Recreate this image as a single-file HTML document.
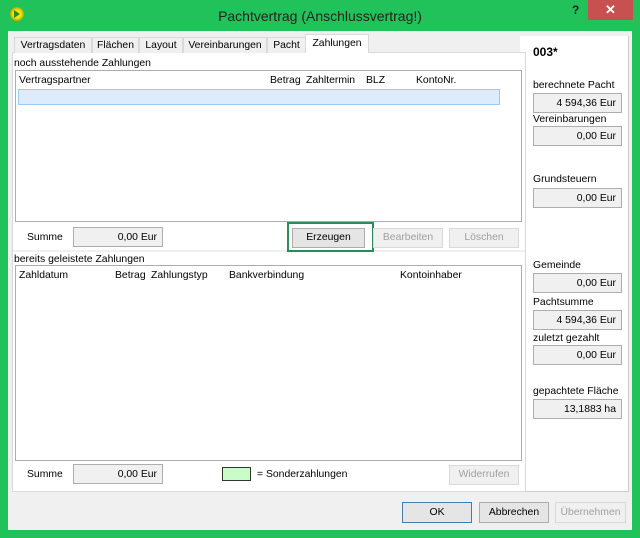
<!DOCTYPE html>
<html><head><meta charset="utf-8"><style>
*{box-sizing:border-box;margin:0;padding:0}
body{width:640px;height:538px;background:#22c25a;font-family:"Liberation Sans",sans-serif;font-size:10.4px;color:#000;position:relative;overflow:hidden}
.a{position:absolute}
.t{position:absolute;white-space:nowrap;line-height:13px}
.box{position:absolute;background:#f0f0f0;border:1px solid #adadad;text-align:right;padding-right:5px;line-height:19px}
.btn{position:absolute;background:#e5e5e5;border:1px solid #adadad;text-align:center;line-height:18px}
.dis{background:#f0f0f0;border-color:#d9d9d9;color:#a0a0a0}
.tab{position:absolute;top:37px;height:16px;background:#f0f0f0;border:1px solid #d9d9d9;border-bottom:none;text-align:center;line-height:15px}
</style></head><body>
<div class="a" style="left:10px;top:7px;width:14px;height:14px;border-radius:50%;background:radial-gradient(circle,#ffe600 40%,#9ba000 75%,#c9d0a0);"></div>
<div class="a" style="left:14px;top:10px;width:0;height:0;border-left:6px solid #2a8a2a;border-top:4px solid transparent;border-bottom:4px solid transparent"></div>
<div class="t" style="left:0;width:640px;text-align:center;top:7px;font-size:14px;line-height:18px;color:#222">Pachtvertrag (Anschlussvertrag!)</div>
<div class="t" style="left:572px;top:4px;font-weight:bold;font-size:12px;color:#222">?</div>
<div class="a" style="left:588px;top:0;width:45px;height:20px;background:#c75050;color:#fff;text-align:center;font-size:13px;line-height:20px;font-weight:bold">✕</div>
<div class="a" style="left:8px;top:31px;width:624px;height:499px;background:#f0f0f0"></div>
<div class="a" style="left:520px;top:36px;width:109px;height:456px;background:#fff;border-right:1px solid #ccc;border-bottom:1px solid #ccc"></div>
<div class="a" style="left:12px;top:52px;width:514px;height:440px;background:#fff;border:1px solid #d9d9d9"></div>
<div class="tab" style="left:14px;width:78px">Vertragsdaten</div>
<div class="tab" style="left:92px;width:47px">Flächen</div>
<div class="tab" style="left:139px;width:44px">Layout</div>
<div class="tab" style="left:183px;width:84px">Vereinbarungen</div>
<div class="tab" style="left:267px;width:39px">Pacht</div>
<div class="tab" style="left:305px;top:34px;height:19px;width:64px;background:#fff;line-height:17px">Zahlungen</div>
<div class="t" style="left:14px;top:57px">noch ausstehende Zahlungen</div>
<div class="a" style="left:15px;top:70px;width:507px;height:152px;border:1px solid #adadad;background:#fff"></div>
<div class="t" style="left:19px;top:74px">Vertragspartner</div>
<div class="t" style="left:270px;top:74px">Betrag</div>
<div class="t" style="left:306px;top:74px">Zahltermin</div>
<div class="t" style="left:366px;top:74px">BLZ</div>
<div class="t" style="left:416px;top:74px">KontoNr.</div>
<div class="a" style="left:18px;top:89px;width:482px;height:16px;background:#dcecfc;border:1px solid #99c9f5"></div>
<div class="a" style="left:13px;top:250px;width:512px;height:2px;background:#f0f0f0"></div>
<div class="t" style="left:27px;top:231px">Summe</div>
<div class="box" style="left:73px;top:227px;width:90px;height:20px">0,00 Eur</div>
<div class="a" style="left:287px;top:222px;width:87px;height:30px;border:2px solid #2e8b57"></div>
<div class="btn" style="left:292px;top:228px;width:73px;height:20px">Erzeugen</div>
<div class="btn dis" style="left:373px;top:228px;width:70px;height:20px">Bearbeiten</div>
<div class="btn dis" style="left:449px;top:228px;width:70px;height:20px">Löschen</div>
<div class="t" style="left:14px;top:253px">bereits geleistete Zahlungen</div>
<div class="a" style="left:15px;top:265px;width:507px;height:196px;border:1px solid #adadad;background:#fff"></div>
<div class="t" style="left:19px;top:269px">Zahldatum</div>
<div class="t" style="left:115px;top:269px">Betrag</div>
<div class="t" style="left:151px;top:269px">Zahlungstyp</div>
<div class="t" style="left:229px;top:269px">Bankverbindung</div>
<div class="t" style="left:400px;top:269px">Kontoinhaber</div>
<div class="t" style="left:27px;top:468px">Summe</div>
<div class="box" style="left:73px;top:464px;width:90px;height:20px">0,00 Eur</div>
<div class="a" style="left:222px;top:467px;width:29px;height:14px;background:#c8fcc8;border:1px solid #333"></div>
<div class="t" style="left:257px;top:468px">= Sonderzahlungen</div>
<div class="btn dis" style="left:449px;top:465px;width:70px;height:20px">Widerrufen</div>
<div class="t" style="left:533px;top:46px;font-weight:bold;font-size:12px">003*</div>
<div class="t" style="left:533px;top:79px">berechnete Pacht</div>
<div class="box" style="left:533px;top:93px;width:89px;height:20px">4 594,36 Eur</div>
<div class="t" style="left:533px;top:113px">Vereinbarungen</div>
<div class="box" style="left:533px;top:126px;width:89px;height:20px">0,00 Eur</div>
<div class="t" style="left:533px;top:173px">Grundsteuern</div>
<div class="box" style="left:533px;top:188px;width:89px;height:20px">0,00 Eur</div>
<div class="t" style="left:533px;top:259px">Gemeinde</div>
<div class="box" style="left:533px;top:273px;width:89px;height:20px">0,00 Eur</div>
<div class="t" style="left:533px;top:296px">Pachtsumme</div>
<div class="box" style="left:533px;top:310px;width:89px;height:20px">4 594,36 Eur</div>
<div class="t" style="left:533px;top:332px">zuletzt gezahlt</div>
<div class="box" style="left:533px;top:345px;width:89px;height:20px">0,00 Eur</div>
<div class="t" style="left:533px;top:385px">gepachtete Fläche</div>
<div class="box" style="left:533px;top:399px;width:89px;height:20px">13,1883 ha</div>
<div class="btn" style="left:402px;top:502px;width:70px;height:21px;border-color:#3c7fb1;line-height:19px">OK</div>
<div class="btn" style="left:479px;top:502px;width:70px;height:21px;line-height:19px">Abbrechen</div>
<div class="btn dis" style="left:555px;top:502px;width:71px;height:21px;line-height:19px">Übernehmen</div>
</body></html>
